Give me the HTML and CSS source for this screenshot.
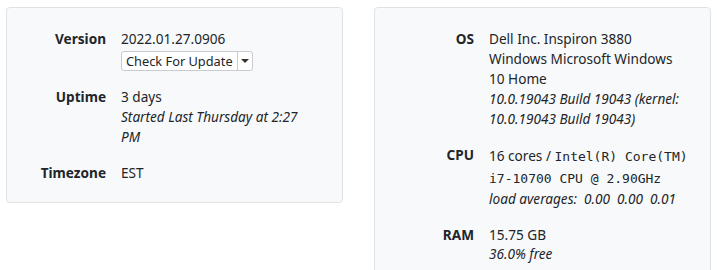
FILE: index.html
```html
<!DOCTYPE html>
<html lang="en">
<head>
    <meta charset="UTF-8">
    <meta name="viewport" content="width=device-width, initial-scale=1.0">
    <title>System Info</title>
    <link rel="stylesheet" href="styles.css">
</head>
<body>
    <div class="panels">
        <div class="panel panel-narrow">
            <dl class="info-list">
                <dt>Version</dt>
                <dd>
                    <div>2022.01.27.0906</div>
                    <div class="split-btn">
                        <button class="btn-main">Check For Update</button>
                        <button class="btn-caret"><span class="caret"></span></button>
                    </div>
                </dd>
                <dt>Uptime</dt>
                <dd>
                    <div>3 days</div>
                    <div class="note">Started Last Thursday at 2:27 PM</div>
                </dd>
                <dt>Timezone</dt>
                <dd>EST</dd>
            </dl>
        </div>
        <div class="panel">
            <dl class="info-list">
                <dt>OS</dt>
                <dd>
                    <div>Dell Inc. Inspiron 3880 Windows Microsoft Windows 10 Home</div>
                    <div class="note">10.0.19043 Build 19043 (kernel: 10.0.19043 Build 19043)</div>
                </dd>
                <dt>CPU</dt>
                <dd>
                    <div class="cpu-name">16 cores / <code>Intel(R) Core(TM) i7-10700 CPU @ 2.90GHz</code></div>
                    <div class="note">load averages:&nbsp; 0.00&nbsp; 0.00&nbsp; 0.01</div>
                </dd>
                <dt>RAM</dt>
                <dd>
                    <div>15.75 GB</div>
                    <div class="note ram-free">36.0% free</div>
                </dd>
            </dl>
        </div>
    </div>
</body>
</html>
```

FILE: styles.css
```css
:root{
    --panel-bg: #f8f9fa;
    --panel-border: #dfe2e5;
    --text-color: #212529;
}
html, body{
    margin: 0;
    padding: 0;
    background: #fff;
    color: var(--text-color);
    font-family: "Noto Sans", "Liberation Sans", sans-serif;
    font-size: 13.6px;
    line-height: 20px;
}

.panels{
    display: grid;
    grid-template-columns: 337px 337px;
    column-gap: 31px;
    padding: 7px 0 0 6px;
    align-items: start;
}

.panel{
    background: var(--panel-bg);
    border: 1px solid var(--panel-border);
    border-radius: 4px;
    padding: 21px 20px 19px 0;
}
.panel-narrow{
    padding-right: 28px;
}

.info-list{
    display: grid;
    grid-template-columns: 99px 1fr;
    column-gap: 15px;
    margin: 0;
}
.info-list dt{
    text-align: right;
    font-weight: bold;
}
.info-list dd{
    margin: 0 0 16px;
}
.info-list dd:last-of-type{
    margin-bottom: 0;
}

.note{
    font-style: italic;
}

.split-btn{
    display: inline-flex;
    margin-top: 2px;
    border: 1px solid #c8ccd0;
    border-radius: 3px;
    background: #fff;
}
.split-btn button{
    background: none;
    border: 0;
    margin: 0;
    font: inherit;
    font-size: 12.8px;
    color: inherit;
    line-height: 18px;
    cursor: pointer;
}
.btn-main{
    padding: 0 4px;
}
.btn-caret{
    border-left: 1px solid #c8ccd0 !important;
    padding: 0 3px;
    display: flex;
    align-items: center;
}
.caret{
    display: inline-block;
    border-top: 4px solid #333;
    border-left: 4px solid transparent;
    border-right: 4px solid transparent;
}

.cpu-name{
    line-height: 21px;
}
.cpu-name code{
    font-family: "DejaVu Sans Mono", "Liberation Mono", monospace;
    font-size: 13px;
}

.ram-free{
    line-height: 18px;
}
```
